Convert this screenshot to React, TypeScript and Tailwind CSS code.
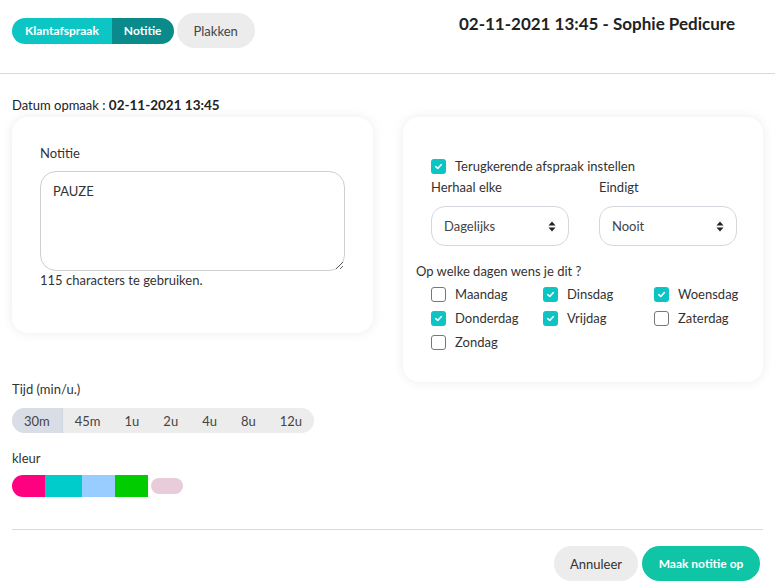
import { useState } from 'react';

const days = [
    { label: 'Maandag', checked: false },
    { label: 'Dinsdag', checked: true },
    { label: 'Woensdag', checked: true },
    { label: 'Donderdag', checked: true },
    { label: 'Vrijdag', checked: true },
    { label: 'Zaterdag', checked: false },
    { label: 'Zondag', checked: false },
];

const times = ['30m', '45m', '1u', '2u', '4u', '8u', '12u'];

function Check({ checked }: { checked: boolean }) {
    if (checked) {
        return (
            <span className="w-[15px] h-[15px] rounded-[3px] bg-[#0cc4c4] flex items-center justify-center shrink-0">
                <svg width="9" height="9" viewBox="0 0 10 10" fill="none">
                    <path d="M2 5.2 L4.2 7.2 L8 3" stroke="white" strokeWidth="1.8" strokeLinecap="round" strokeLinejoin="round" />
                </svg>
            </span>
        );
    }
    return <span className="w-[15px] h-[15px] rounded-[3px] border border-[#777] bg-white shrink-0" />;
}

function SelectBox({ value }: { value: string }) {
    return (
        <div className="h-[40px] w-[138px] rounded-[14px] border border-[#d4d7dd] flex items-center justify-between px-[12px] text-[13px] text-[#444]">
            <span>{value}</span>
            <svg width="8" height="11" viewBox="0 0 8 11">
                <path d="M4 0.5 L7.5 4.5 H0.5 Z" fill="#222" />
                <path d="M4 10.5 L7.5 6.5 H0.5 Z" fill="#222" />
            </svg>
        </div>
    );
}

export default function App() {
    const [time, setTime] = useState('30m');
    const [note, setNote] = useState('PAUZE');

    return (
        <div className="min-h-screen bg-white text-[#333] text-[13px] leading-[20px]" style={{ fontFamily: 'Lato, "Noto Sans", sans-serif' }}>
            {/* header */}
            <div className="h-[74px] border-b border-[#d9d9d9] flex items-start justify-between px-3 pt-[13px]">
                <div className="flex items-center gap-[3px]">
                    <div className="flex h-[26px] rounded-full overflow-hidden text-white font-bold text-[12px]">
                        <span className="bg-[#0cc6c6] px-[13px] flex items-center">Klantafspraak</span>
                        <span className="bg-[#0a8a8a] px-[12px] flex items-center">Notitie</span>
                    </div>
                    <span className="h-[35px] px-[17px] rounded-full bg-[#ececec] flex items-center text-[13px] text-[#444]">Plakken</span>
                </div>
                <div className="font-bold text-[17px] text-[#222] pt-[1px] pr-[28px]">02-11-2021 13:45 - Sophie Pedicure</div>
            </div>

            <div className="px-3">
                <div className="mt-[21px] text-[13px] text-[#222]">
                    Datum opmaak : <span className="font-bold text-[13.5px]">02-11-2021 13:45</span>
                </div>

                <div className="flex justify-between items-start mt-[2px]">
                    {/* left column */}
                    <div className="w-[361px]">
                        <div className="h-[216px] rounded-[16px] bg-white shadow-[0_0_12px_rgba(0,0,0,0.08)] px-[28px] pt-[26px]">
                            <div className="text-[13px] text-[#333]">Notitie</div>
                            <textarea
                                value={note}
                                onChange={(e) => setNote(e.target.value)}
                                className="mt-[8px] block w-full h-[100px] rounded-[16px] border border-[#cfcfcf] px-[12px] pt-[9px] text-[13px] text-[#333] outline-none"
                            />
                            <div className="text-[13px] text-[#333] leading-[18px]">{115 - note.length + 5} characters te gebruiken.</div>
                        </div>

                        <div className="mt-[46px] text-[13px]">Tijd (min/u.)</div>
                        <div className="mt-[9px] inline-flex h-[25px] rounded-full bg-[#ececec] overflow-hidden">
                            {times.map((t) => (
                                <button
                                    key={t}
                                    onClick={() => setTime(t)}
                                    className={
                                        t === time
                                            ? 'px-[12px] text-[13px] text-[#444] bg-[#d9dee6] border-r border-[#cfd5de]'
                                            : 'px-[12px] text-[13px] text-[#444]'
                                    }
                                >
                                    {t}
                                </button>
                            ))}
                        </div>

                        <div className="mt-[15px] text-[13px]">kleur</div>
                        <div className="mt-[7px] flex items-center h-[22px]">
                            <span className="w-[33px] h-[22px] bg-[#ff0080] rounded-l-full" />
                            <span className="w-[37px] h-[22px] bg-[#00cccc]" />
                            <span className="w-[33px] h-[22px] bg-[#99ccff]" />
                            <span className="w-[33px] h-[22px] bg-[#00cc00]" />
                            <span className="ml-[3px] w-[32px] h-[16px] bg-[#e9ccd9] rounded-full" />
                        </div>
                    </div>

                    {/* right card */}
                    <div className="w-[360px] h-[265px] rounded-[16px] bg-white shadow-[0_0_12px_rgba(0,0,0,0.08)] px-[13px] pt-[41px]">
                        <div className="pl-[15px] flex items-center gap-[9px] h-[16px]">
                            <Check checked={true} />
                            <span>Terugkerende afspraak instellen</span>
                        </div>
                        <div className="pl-[15px] flex gap-[30px] mt-[3px]">
                            <div>
                                <div>Herhaal elke</div>
                                <div className="mt-[9px]"><SelectBox value="Dagelijks" /></div>
                            </div>
                            <div>
                                <div>Eindigt</div>
                                <div className="mt-[9px]"><SelectBox value="Nooit" /></div>
                            </div>
                        </div>
                        <div className="mt-[15px]">Op welke dagen wens je dit ?</div>
                        <div className="pl-[15px] mt-[5px] grid grid-cols-[112px_111px_1fr] gap-y-[8px]">
                            {days.map((d) => (
                                <div key={d.label} className="flex items-center gap-[9px] h-[16px]">
                                    <Check checked={d.checked} />
                                    <span>{d.label}</span>
                                </div>
                            ))}
                        </div>
                    </div>
                </div>

                <div className="mt-[32px] border-t border-[#d9d9d9]" />
                <div className="mt-[16px] flex justify-end gap-[4px] pr-[3px]">
                    <button className="h-[35px] w-[84px] rounded-full bg-[#ececec] text-[13px] text-[#333]">Annuleer</button>
                    <button className="h-[35px] w-[118px] rounded-full bg-[#0fc5a5] text-[12px] font-bold text-white">Maak notitie op</button>
                </div>
            </div>
        </div>
    );
}
